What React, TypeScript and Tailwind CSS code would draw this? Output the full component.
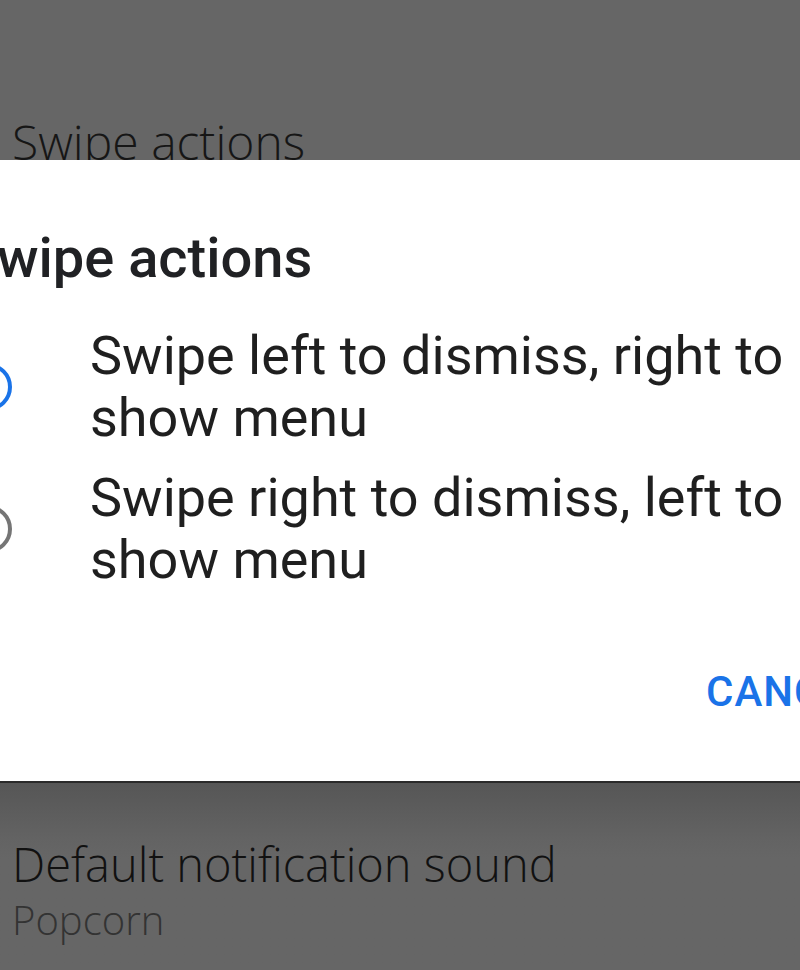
export default function App() {
  const options = [
    { label: 'Swipe left to dismiss, right to show menu', selected: true },
    { label: 'Swipe right to dismiss, left to show menu', selected: false },
  ]

  return (
    <div className="h-[970px] w-[800px] overflow-hidden bg-[#666666] flex flex-col">
      {/* settings row behind the scrim, cut by the dialog */}
      <div className="h-[160px] shrink-0 overflow-hidden flex items-end">
        <div
          className="pl-[12px] text-[48px] leading-none text-[#161616] whitespace-nowrap translate-y-[6px]"
          style={{ fontFamily: '"Open Sans", sans-serif', fontWeight: 300 }}
        >
          Swipe actions
        </div>
      </div>

      <div className="h-[621px] shrink-0 bg-white overflow-hidden" style={{ fontFamily: 'Roboto, sans-serif' }}>
        <h2 className="mt-[68px] -ml-[37px] text-[56px] leading-[60px] font-medium text-[#202124] whitespace-nowrap">
          Swipe actions
        </h2>

        <div className="mt-[37px] flex flex-col gap-[18px]">
          {options.map((o) => (
            <div key={o.label} className="flex items-center">
              <div
                className={`shrink-0 -ml-[36px] h-[48px] w-[48px] rounded-full border-[4px] ${
                  o.selected ? 'border-[#1a73e8]' : 'border-[#757575]'
                }`}
              />
              <p className="ml-[78px] w-[720px] text-[54px] leading-[62px] text-[#1f1f1f]">{o.label}</p>
            </div>
          ))}
        </div>

        <div className="mt-[76px] flex">
          <span className="ml-[706px] text-[42px] leading-[50px] font-medium tracking-[1px] text-[#1a73e8] whitespace-nowrap">
            CANCEL
          </span>
        </div>
      </div>

      <div className="h-[2px] shrink-0 bg-[#2a2a2a]" />

      <div className="flex-1 bg-gradient-to-b from-[#565656] via-[#636363] via-30% to-[#666666] to-40% pl-[12px] pt-[52px]">
        <div
          className="text-[47px] leading-[58px] text-[#111111] whitespace-nowrap"
          style={{ fontFamily: '"Open Sans", sans-serif', fontWeight: 300 }}
        >
          Default notification sound
        </div>
        <div
          className="text-[40px] leading-[54px] text-[#333333]"
          style={{ fontFamily: '"Open Sans", sans-serif', fontWeight: 300 }}
        >
          Popcorn
        </div>
      </div>
    </div>
  )
}
